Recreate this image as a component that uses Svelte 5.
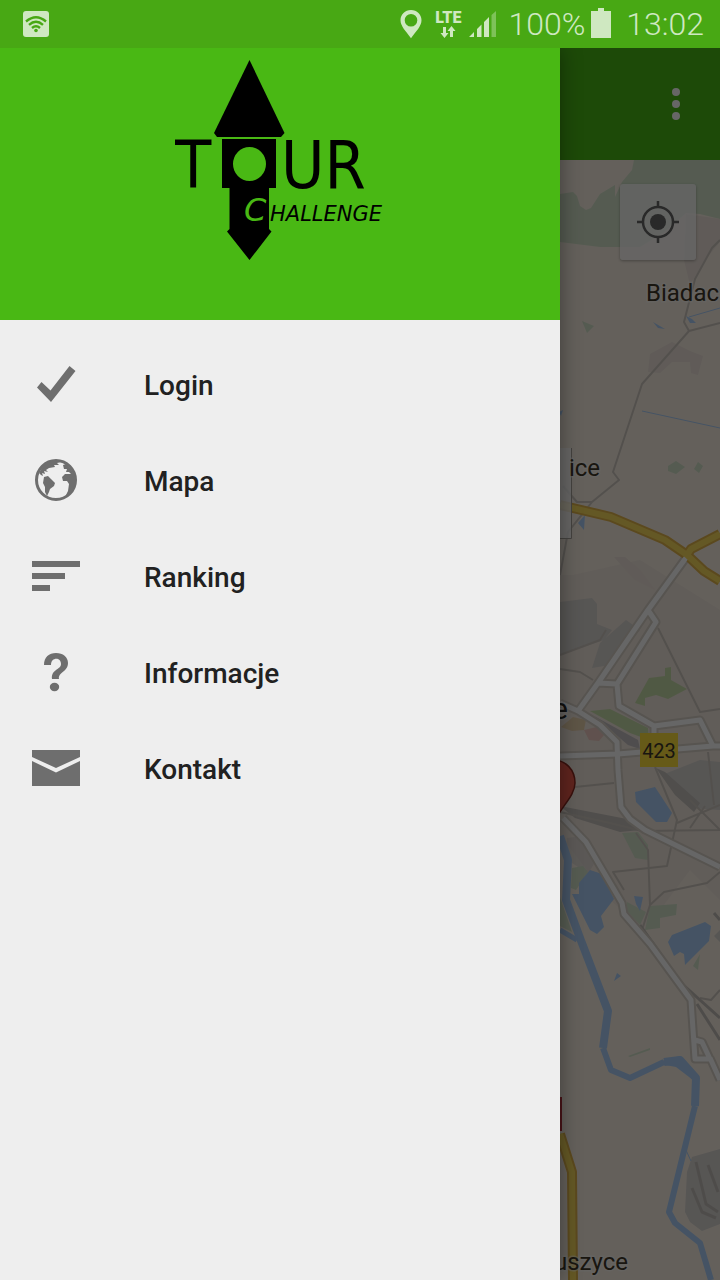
<!-- App.svelte -->
<script lang="ts">
  type MenuItem = { id: string; label: string };

  const items: MenuItem[] = [
    { id: 'login', label: 'Login' },
    { id: 'mapa', label: 'Mapa' },
    { id: 'ranking', label: 'Ranking' },
    { id: 'informacje', label: 'Informacje' },
    { id: 'kontakt', label: 'Kontakt' },
  ];
</script>

<div class="app">
  <header class="status-bar">
    <svg class="wifi" viewBox="0 0 26 26" width="26" height="26">
      <rect width="26" height="26" rx="3" fill="#cfe8c1" />
      <g fill="none" stroke="#48a814" stroke-width="2.4">
        <path d="M3 10.5Q13 2 23 10.5" />
        <path d="M6 13.8Q13 7.600 20 13.800" />
        <path d="M9 17Q13 13.400 17 17" />
      </g>
      <circle cx="13" cy="19.500" r="1.800" fill="#48a814" />
    </svg>

    <div class="status-info">
      <svg viewBox="0 0 22 30" width="22" height="30">
        <path
          fill="#cfe8c1"
          fill-rule="evenodd"
          d="M11 1C5 1 .5 5.500 .5 11.200c0 6 5.500 11 10.500 18 5-7 10.500-12 10.500-18C21.500 5.500 17 1 11 1zm0 4a6.300 6.300 0 1 1 0 12.600A6.300 6.300 0 0 1 11 5z"
        />
      </svg>
      <div class="lte">
        <span>LTE</span>
        <svg viewBox="0 0 16 12" width="16" height="12" fill="#cfe8c1">
          <path d="M3 1h3v6h2.500l-4 5-4-5H3zM10 11h3V5h2.500l-4-5-4 5H10z" />
        </svg>
      </div>
      <svg class="signal" viewBox="0 0 27 26" width="27" height="26" fill="#cfe8c1">
        <path d="M0 26l5-5v5zM8 26v-8l4.500-4.500V26zM15 26V11l5-5v20z" />
        <path d="M22.500 26V4L27 0v26z" opacity=".4" />
      </svg>
      <span class="battery-level">100%</span>
      <svg class="battery" viewBox="0 0 20 30" width="20" height="30" fill="#cfe8c1">
        <path d="M7 0h6v3h7v27H0V3h7z" />
      </svg>
      <time>13:02</time>
    </div>
  </header>

  <div class="screen">
    <main class="page">
      <div class="toolbar">
        <button class="more" aria-label="Menu">
          <svg viewBox="0 0 8 32" width="8" height="32" fill="#fff">
            <circle cx="4" cy="4" r="4" />
            <circle cx="4" cy="16" r="4" />
            <circle cx="4" cy="28" r="4" />
          </svg>
        </button>
      </div>

      <div class="map">
        <svg class="tiles" viewBox="0 160 720 1120" preserveAspectRatio="xMaxYMin slice">
          <!-- built-up areas -->
          <g fill="#efe4dc">
            <path d="M650 354L672 342 690 351 703 356 698 375 691 373 690 362 672 362 660 373 648 372z" />
            <path d="M573 575L640 560 720 610V900L690 870 645 930 610 900 560 835V575z" opacity=".7" />
            <path d="M614 557L625 557 640 570 655 590 635 580z" />
          </g>
          <g fill="#d9d6d3">
            <path d="M560 602L592 598 597 604V624L612 630 604 640 560 655zM626 620L640 630 610 665 592 668 600 643z" />
            <path d="M662 775L700 760 720 762V810L690 808 675 792zM692 1157L720 1149V1224L702 1231 690 1222 685 1212 687 1172zM720 930L714 936 720 942z" />
            <path d="M567 838L582 836 595 862 588 874 565 858z" opacity=".6" />
          </g>

          <!-- forests and parks -->
          <g fill="#d4e4cb">
            <path d="M634 160H720V219L700 214 686 213 664 232 640 247 600 247 560 242V194L573 192 577 196 580 206 586 210 591 208 600 194 615 185V197L622 182 632 170z" />
            <path d="M582 321L594 326 587 333zM668 466L676 461 685 467 676 474 668 471zM694 469L698 462 703 466 699 473z" />
            <path d="M622 833L638 832 648 845V860L635 858zM650 906L677 904 676 915 660 918V928L645 930zM627 902L646 912 640 925 626 910zM572 868L583 866 588 872 576 890 571 888zM560 897L572 932 560 926z" />
            <path d="M693 966L700 954 698 970zM628 1056L650 1048 650 1050 630 1057z" />
          </g>
          <path d="M686 214L720 219V242L705 260 690 285 684 260z" fill="#efe4dc" />
          <g fill="#c9dfab">
            <path d="M649 678L665 676V668L671 667 671 680 687 689 668 699 656 695 645 698V706L635 703z" />
            <path d="M590 711L610 709 648 728 649 740 630 733 610 722z" />
          </g>
          <path d="M656 768L665 772 700 803 694 812 675 795zM560 806L632 820 650 829 620 832 575 818z" fill="#c7c3be" />
          <path d="M594 716L638 740 640 749 628 745z" fill="#c5c0c4" />
          <path d="M561 727L573 717 586 720 584 730 572 731z" fill="#ecd4b0" />
          <path d="M584 730L601 726 604 735 599 741 589 740z" fill="#efcbc2" />

          <!-- local roads -->
          <g class="minor">
            <path d="M720 240L712 248 695 279 684 322 689 331 720 323M689 331L642 384 613 472 619 480 592 502H577L563 486M592 502L568 532 560 575" />
            <path d="M560 655L600 640 606 630M560 669L580 672 593 680M658 628L700 712 720 709M575 787L614 783M655 767L677 820 667 866 613 872 624 890M708 752L714 805" />
            <path d="M560 812L610 823 642 831 720 830M636 833L648 850 650 905 642 930M650 905L664 892 707 883 720 872M677 823L720 805M690 800L720 830M690 828L705 806M700 998L711 1000 720 990" />
          </g>
          <path class="rail" d="M640 925L655 946 680 982 720 1018M697 1004L720 1040M714 913L720 920M696 1162L706 1204 718 1212M692 1188L702 1212 716 1218M708 1165L718 1192" />

          <!-- rivers and lakes -->
          <g class="water">
            <path d="M560 836L568 860 566 900 580 938 608 1011 603 1048" stroke-width="8" />
            <path d="M603 1048L611 1070 630 1078 664 1062" stroke-width="6" />
            <path d="M664 1062L680 1060 696 1078 695 1106" stroke-width="8" />
            <path d="M695 1106L683 1155 669 1212 675 1223 700 1243 711 1280" stroke-width="6" />
            <path d="M560 930L577 940" stroke-width="5" />
            <path d="M642 411L720 428M685 1148L691 1161M689 317L720 308" stroke-width="1" />
          </g>
          <g fill="#acd0fa">
            <path d="M635 792L655 787 672 813 667 822 656 822 636 802zM572 894L579 894V883L590 870 602 874 614 899 601 916 604 927 597 934 590 930z" />
            <path d="M668 942L672 935 705 922 711 926 709 941 685 965 684 954 680 952 674 956zM634 896L643 897 640 911 636 904zM614 981L617 973 621 976z" />
            <path d="M664 1060L680 1056 699 1077 699 1090 693 1080 676 1067 660 1064zM578 523L585 515 584 530zM653 322L665 329 658 328zM686 316L692 319 696 323 690 323zM559 412L563 410 561 416z" />
          </g>

          <!-- main roads -->
          {#each ['edge', 'fill'] as layer}
            <g class="street {layer}">
              <path d="M688 555L648 610 598 683 578 711M648 610L656 622 617 684 598 683M617 684L619 706 654 726 700 720 713 746M654 726V750M560 703L578 711 600 725 617 742 618 770 621 807 630 819 645 830 720 867" />
              <path d="M560 756L618 754 713 746H720M563 818L586 842 622 903 624 914 650 944 691 1000 695 1059H710L702 1042 695 1040M710 1058L720 1080" />
            </g>
            <g class="highway {layer}">
              <path d="M560 505L611 517 665 540 687 555 704 571 720 581M687 555L691 549 720 534M560 1134L572 1172 573 1280" />
            </g>
          {/each}

          <path d="M560 1097h2v34h-2z" fill="#b8323c" />
          <path
            d="M553 760C540 760 531 770 531 783c0 14 17 26 22 43 5-17 22-29 22-43 0-13-9-23-22-23z"
            fill="#ee5a4c"
            stroke="#8c2a20"
            stroke-width="1.500"
          />
          <rect x="640" y="733" width="38" height="34" fill="#ffe13c" />
          <path d="M480 448H571V538H480z" fill="#fff" opacity=".8" />
          <path d="M480 538.500H571.500V448" fill="none" stroke="#aaa59f" />

          <text class="shield" x="659" y="758">423</text>
          <text class="place" x="646" y="301">Biadac</text>
          <text class="place end" x="600" y="476">ice</text>
          <text class="city end" x="568" y="719">e</text>
          <text class="place end" x="628" y="1270">uszyce</text>
        </svg>

        <button class="locate" aria-label="Moja lokalizacja">
          <svg viewBox="0 0 42 42" width="42" height="42">
            <circle cx="21" cy="21" r="8" fill="#666" />
            <circle cx="21" cy="21" r="15" fill="none" stroke="#666" stroke-width="2.500" />
            <path d="M21 0V6M21 36V42M0 21H6M36 21H42" stroke="#666" stroke-width="2.500" />
          </svg>
        </button>
      </div>
    </main>

    <div class="scrim"></div>

    <aside class="drawer">
      <div class="brand">
        <svg viewBox="175 60 210 200" width="210" height="200" role="img" aria-label="Tour Challenge">
          <path d="M249.500 60L284.500 133 281 137H217L214 133z" />
          <path fill-rule="evenodd" d="M222 139H276V188H269V229L271.500 231.500 249.500 260 227 231.500 229.500 229V188H222zM249.500 147a16.500 17 0 1 0 0 34a16.500 17 0 1 0 0-34z" />
          <text class="tour" x="175" y="188">T</text>
          <text class="tour" x="281" y="188">UR</text>
          <text class="challenge initial" x="244" y="221">C</text>
          <text class="challenge" x="270" y="221">HALLENGE</text>
        </svg>
      </div>

      <nav>
        {#each items as item (item.id)}
          <a href="#{item.id}">
            <svg viewBox="0 0 48 48" width="48" height="48" fill="#6e6e6e">
              {#if item.id === 'login'}
                <path d="M5 27.500L9.500 22 18.500 30.500 37.500 6 43.500 11 19 42z" />
              {:else if item.id === 'mapa'}
                <circle cx="24" cy="24" r="19.500" fill="none" stroke="#6e6e6e" stroke-width="3" />
                <path d="M7 17L11 10 19 5 27 4 29 6 25 7 27 9 22 9 23 11 17 12 14 14 16 16 12 15 13 18 10 17 11 20 9 19z" />
                <path d="M12 21L16 20 19 23 23 27 22 30 18 33 17 36 15 40 13 36 13 31 11 27zM31 9L34 8 39 13 43 20 43 29 39 37 33 41 36 35 37 28 35 25 31 25 30 21 33 18 39 18 37 16 34 16 35 13 32 13z" />
              {:else if item.id === 'ranking'}
                <path d="M0 9H48V15H0zM0 21H33V27H0zM0 33H18V39H0z" />
              {:else if item.id === 'informacje'}
                <path d="M12 17C12 9 17 5 24 5s12 4 12 10c0 9-10 9-9 16h-7c-1-10 9-9 9-15 0-7-10-7-10 1z" />
                <ellipse cx="22.500" cy="39" rx="4.700" ry="4.200" />
              {:else}
                <path d="M0 6H48V13L24 24 0 13zM0 17L24 28.500 48 17V42H0z" />
              {/if}
            </svg>
            <span>{item.label}</span>
          </a>
        {/each}
      </nav>
    </aside>
  </div>
</div>

<style>
  :global(body) {
    margin: 0;
    font-family: Roboto, "Liberation Sans", sans-serif;
  }

  .app {
    display: flex;
    flex-direction: column;
    min-height: 100vh;
  }

  svg {
    display: block;
    flex-shrink: 0;
  }

  button {
    display: flex;
    align-items: center;
    justify-content: center;
    padding: 0;
    border: 0;
    background: none;
    cursor: pointer;
  }

  .status-bar {
    display: flex;
    align-items: center;
    justify-content: space-between;
    height: 48px;
    padding: 0 16px 0 23px;
    background-color: #48a814;
    color: #cfe8c1;
  }

  .status-info {
    display: flex;
    align-items: center;
    font-size: 32px;
    font-weight: 300;
    line-height: 50px;
  }

  .lte {
    display: flex;
    flex-direction: column;
    align-items: center;
    margin: 0 8px 0 13px;
    font-size: 16px;
    font-weight: 900;
    line-height: 16px;
  }

  .signal {
    margin-right: 12px;
  }

  .battery {
    margin: 0 15px 2px 6px;
  }

  .screen {
    position: relative;
    display: flex;
    flex: 1;
    overflow: hidden;
  }

  .page {
    display: flex;
    flex: 1;
    flex-direction: column;
  }

  .toolbar {
    display: flex;
    align-items: center;
    justify-content: flex-end;
    height: 112px;
    padding: 0 16px;
    background-color: #49b814;
  }

  .more {
    width: 56px;
    height: 56px;
  }

  .map {
    position: relative;
    flex: 1;
    background-color: #faf0e4;
  }

  .tiles {
    position: absolute;
    width: 100%;
    height: 100%;
  }

  .minor,
  .rail,
  .water,
  .street,
  .highway {
    fill: none;
    stroke-linejoin: round;
  }

  .minor {
    stroke: #cfc9c0;
    stroke-width: 2;
  }

  .rail {
    stroke: #c4bfb9;
    stroke-width: 3;
  }

  .water {
    stroke: #acd0fa;
  }

  .street.edge {
    stroke: #d9d2c8;
    stroke-width: 9;
  }

  .street.fill {
    stroke: #fff;
    stroke-width: 5;
  }

  .highway.edge {
    stroke: #e4b64c;
    stroke-width: 10;
  }

  .highway.fill {
    stroke: #fbdc5e;
    stroke-width: 6;
  }

  .place,
  .city {
    fill: #40382a;
    stroke: #fff;
    stroke-opacity: 0.5;
    stroke-width: 3;
    paint-order: stroke;
    font-size: 24px;
  }

  .city {
    fill: #292725;
    font-size: 30px;
  }

  .end {
    text-anchor: end;
  }

  .shield {
    fill: #40382a;
    font-size: 20px;
    text-anchor: middle;
  }

  .locate {
    position: absolute;
    top: 24px;
    right: 24px;
    width: 76px;
    height: 76px;
    border-radius: 3px;
    background-color: rgba(255, 255, 255, 0.75);
    box-shadow: 0 1px 3px rgba(0, 0, 0, 0.3);
  }

  .scrim {
    position: absolute;
    inset: 0;
    background-color: rgba(0, 0, 0, 0.6);
  }

  .drawer {
    position: absolute;
    top: 0;
    bottom: 0;
    left: 0;
    width: 560px;
    max-width: 80%;
    background-color: #eee;
    box-shadow: 0 0 20px rgba(0, 0, 0, 0.4);
  }

  .brand {
    display: flex;
    justify-content: center;
    box-sizing: border-box;
    height: 272px;
    padding-top: 12px;
    background-color: #49b814;
  }

  .tour {
    font-family: "DejaVu Sans Condensed", "DejaVu Sans", sans-serif;
    font-size: 66px;
  }

  .challenge {
    font-family: "DejaVu Sans", sans-serif;
    font-size: 21px;
    font-style: italic;
  }

  .challenge.initial {
    fill: #49b814;
    font-size: 32px;
  }

  nav {
    padding-top: 16px;
  }

  nav a {
    display: flex;
    align-items: center;
    gap: 64px;
    height: 96px;
    padding: 0 32px;
    color: #212121;
    font-size: 28px;
    font-weight: 500;
    text-decoration: none;
  }

  nav span {
    padding-top: 2px;
  }
</style>
